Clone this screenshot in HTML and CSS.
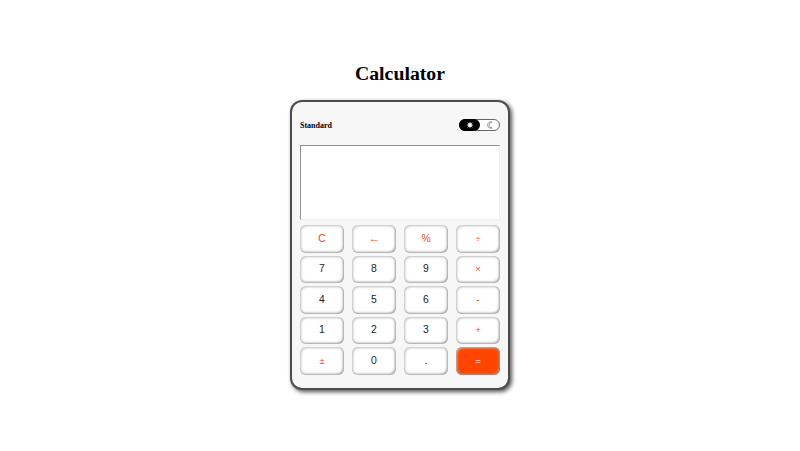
FILE: index.html
```html
<!DOCTYPE html>
<html lang="en">
<head>
<meta charset="utf-8">
<title>Calculator</title>
<link rel="stylesheet" href="styles.css">
</head>
<body>
<h1>Calculator</h1>
<main class="calculator">
  <header class="top">
    <h2>Standard</h2>
    <div class="toggle">
      <span class="mode active"><svg width="8" height="8" viewBox="0 0 8 8"><circle cx="4" cy="4" r="1.9" fill="#fff"/><path d="M4 .8v6.400M.8 4h6.400M1.700 1.700l4.600 4.600M6.300 1.700L1.700 6.300" stroke="#fff" stroke-width=".7"/></svg></span>
      <span class="mode"><svg width="8" height="8" viewBox="0 0 8 8"><path d="M5.900 1C3.300.3 1.600 2 1.600 4s1.700 3.700 4.300 3C4.300 6.500 3.100 5.300 3.100 4S4.300 1.500 5.900 1z" fill="none" stroke="#555" stroke-width=".6"/></svg></span>
    </div>
  </header>
  <div class="display"></div>
  <div class="keys">
    <button class="op">C</button><button class="op" aria-label="Backspace"><span class="arrow">←</span></button><button class="op">%</button><button class="op sym">÷</button>
    <button>7</button><button>8</button><button>9</button><button class="op sym">×</button>
    <button>4</button><button>5</button><button>6</button><button class="op">-</button>
    <button>1</button><button>2</button><button>3</button><button class="op sym">+</button>
    <button class="op sym">±</button><button>0</button><button>.</button><button class="equals sym">=</button>
  </div>
</main>
</body>
</html>
```
FILE: styles.css
```css
* { box-sizing: border-box; }
body {
  margin: 0;
  height: 451px;
  overflow: hidden;
  padding-top: 61px;
  background: #fff;
  font-family: "Liberation Serif", serif;
  color: #000;
}
h1 {
  margin: 0 0 15px;
  height: 24px;
  font-size: 19.800px;
  line-height: 25px;
  text-align: center;
}
.calculator {
  width: 220px;
  height: 290px;
  margin: 0 auto;
  padding: 17px 8px 0;
  border: 2px solid #4c4c4c;
  border-radius: 12px;
  background: #f7f7f7;
  box-shadow: 2px 2px 4px #555;
}
.top {
  display: flex;
  justify-content: space-between;
  height: 26px;
}
h2 {
  margin: 0;
  font-size: 8px;
  line-height: 13px;
}
.toggle {
  display: flex;
  width: 41px;
  height: 12px;
  border: 1px solid #666;
  border-radius: 6px;
  background: #fff;
}
.mode {
  display: flex;
  flex: 1;
  align-items: center;
  justify-content: center;
}
.active {
  margin: -1px 0 -1px -1px;
  flex: 0 0 21px;
  border-radius: 6px;
  background: #000;
}
.display {
  height: 75px;
  margin-bottom: 5px;
  border: 1px solid;
  border-color: #909090 #eee #eee #909090;
  background: #fff;
}
.keys {
  display: grid;
  grid-template-columns: repeat(4, 44px);
  grid-auto-rows: 27.500px;
  gap: 3px 8px;
}
button {
  padding: 0;
  border: 0;
  border-radius: 6px;
  background: #fff;
  box-shadow: inset -1px -1px 2.500px #999, inset 1px 1px 2.500px #c4c4c4;
  color: #222;
  font: 10.400px/26px "Liberation Sans", sans-serif;
}
.op { color: #f04a20; }
.sym { font-size: 9.500px; }
.arrow {
  display: inline-block;
  font-family: "Liberation Serif", serif;
  font-size: 10.500px;
  transform: scaleX(1.100);
}
.equals {
  background: #ff4500;
  color: #fff;
}
```
